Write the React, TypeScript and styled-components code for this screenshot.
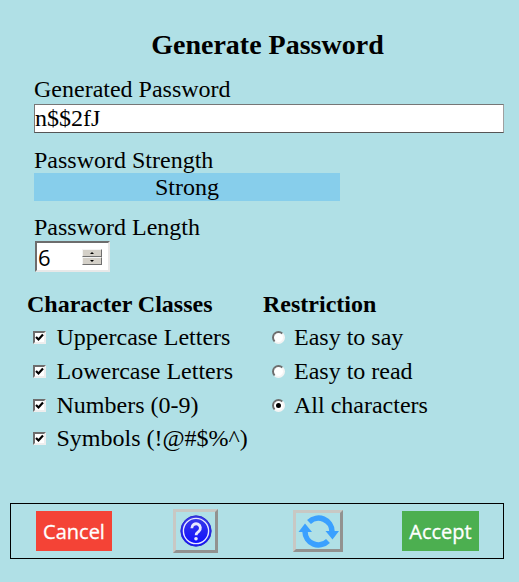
import React from 'react'
import styled, { createGlobalStyle } from 'styled-components'

const GlobalStyle = createGlobalStyle`
  html, body {
    margin: 0;
    padding: 0;
    background: #b0e0e6;
  }
  body {
    font-family: "Liberation Serif", "Times New Roman", serif;
    color: #000;
  }
`

const Page = styled.div`
  width: 519px;
  height: 582px;
  display: flex;
  flex-direction: column;
  box-sizing: border-box;
  padding: 29px 15px 0 9px;
  overflow: hidden;
`

const Title = styled.h1`
  margin: 0 0 15px;
  font-size: 28px;
  line-height: 32px;
  font-weight: bold;
  text-align: center;
  width: 517px;
`

const Section = styled.div<{ $gap: number }>`
  padding-left: 25px;
  margin-bottom: ${p => p.$gap}px;
`

const Label = styled.div`
  font-size: 24px;
  line-height: 26px;
`

const PasswordInput = styled.div`
  width: 470px;
  height: 29px;
  margin-top: 2px;
  box-sizing: border-box;
  background: #fff;
  border: 1px solid;
  border-color: #767676 #a0a0a0 #555 #767676;
  font-size: 24px;
  line-height: 26px;
`

const StrengthBar = styled.div`
  width: 306px;
  height: 28px;
  background: #87ceeb;
  font-size: 24px;
  line-height: 29px;
  text-align: center;
`

const SpinBox = styled.div`
  width: 75px;
  height: 31px;
  margin-top: 1px;
  margin-left: 1px;
  box-sizing: border-box;
  background: #fff;
  border: 2px solid;
  border-color: #6d6d6d #e8e8e8 #e8e8e8 #6d6d6d;
  display: flex;
  align-items: center;
  justify-content: space-between;
  padding: 0 6px 0 1px;
  font-family: "Open Sans", "DejaVu Sans", sans-serif;
  font-size: 22px;
`

const SpinButtons = styled.div`
  display: flex;
  flex-direction: column;
  width: 20px;
`

const SpinButton = styled.div<{ $down?: boolean }>`
  height: 8px;
  box-sizing: border-box;
  background: #d4d0c8;
  border: 1px solid;
  border-color: #f4f4f4 #6f6f6f #6f6f6f #f4f4f4;
  position: relative;
  &::after {
    content: "";
    position: absolute;
    left: 7px;
    top: 2px;
    border-left: 2px solid transparent;
    border-right: 2px solid transparent;
    ${p => (p.$down ? 'border-top: 2px solid #000;' : 'border-bottom: 2px solid #000;')}
  }
`

const Columns = styled.div`
  display: flex;
  margin-top: 8px;
`

const Column = styled.div<{ $width: number }>`
  width: ${p => p.$width}px;
  padding-left: 18px;
  box-sizing: border-box;
`

const Heading = styled.div`
  font-size: 24px;
  line-height: 26px;
  font-weight: bold;
  margin-bottom: 4px;
`

const OptionRow = styled.div`
  display: flex;
  align-items: center;
  height: 33.7px;
  font-size: 24px;
  white-space: nowrap;
`

const CheckBox = styled.span`
  width: 13px;
  height: 13px;
  box-sizing: border-box;
  margin: 0 10.5px 0 6px;
  background: #fff;
  border: 2px solid;
  border-color: #6d6d6d #eee #eee #6d6d6d;
  flex: none;
  display: flex;
`

const RadioMark = styled.span`
  width: 13px;
  height: 13px;
  box-sizing: border-box;
  margin: 0 9px 0 9px;
  border-radius: 50%;
  background: #fff;
  border: 2px solid;
  border-color: #6d6d6d #f4f4f4 #f4f4f4 #6d6d6d;
  flex: none;
  display: flex;
  align-items: center;
  justify-content: center;
`

const RadioDot = styled.span`
  width: 5px;
  height: 5px;
  border-radius: 50%;
  background: #000;
`

const Footer = styled.div`
  margin-top: 47px;
  margin-left: 1px;
  width: 494px;
  height: 56px;
  box-sizing: border-box;
  border: 1px solid #000;
  display: flex;
  align-items: center;
  padding-left: 25px;
`

const TextButton = styled.div<{ $bg: string; $width: number; $offset?: number }>`
  width: ${p => p.$width}px;
  height: 40px;
  margin-left: ${p => p.$offset || 0}px;
  background: ${p => p.$bg};
  color: #fff;
  font-family: "Open Sans", "Noto Sans", sans-serif;
  font-size: 20px;
  line-height: 41px;
  text-align: center;
  -webkit-text-stroke: 0.3px #fff;
`

const IconButton = styled.div<{ $width: number; $height: number; $offset: number }>`
  width: ${p => p.$width}px;
  height: ${p => p.$height}px;
  margin-left: ${p => p.$offset}px;
  box-sizing: border-box;
  border: 3px solid;
  border-color: #c8c8c4 #929290 #929290 #c8c8c4;
  display: flex;
  align-items: center;
  justify-content: center;
`

const HelpIcon = () => (
  <svg width="32" height="32" viewBox="0 0 32 32">
    <defs>
      <linearGradient id="helpFill" x1="0" y1="0" x2="0" y2="1">
        <stop offset="0" stopColor="#3c3ce6" />
        <stop offset="1" stopColor="#0c0cff" />
      </linearGradient>
    </defs>
    <circle cx="16" cy="16" r="15.2" fill="url(#helpFill)" stroke="#2a2ad0" strokeWidth="1" />
    <circle cx="16" cy="16" r="12.6" fill="none" stroke="#e8e8ff" strokeWidth="1.4" />
    <path
      d="M11.8 13.2a4.300 4.300 0 1 1 7 3.200c-1.700 1.300-2.700 1.900-2.700 3.800"
      fill="none"
      stroke="#e8e8ff"
      strokeWidth="2.800"
    />
    <circle cx="16" cy="23.800" r="1.800" fill="#e8e8ff" />
  </svg>
)

const RefreshIcon = () => (
  <svg width="44" height="36" viewBox="0 0 44 36">
    <g fill="none" stroke="#3aa0ff" strokeWidth="5.500">
      <path d="M13 9A13.500 13.500 0 0 1 36 18.500" />
      <path d="M9 18.500A13.500 13.500 0 0 0 32 28" />
    </g>
    <path d="M2.500 19 9 10.500 16 19z" fill="#3aa0ff" />
    <path d="M29.500 18 43 18 36.500 26.500z" fill="#3aa0ff" />
  </svg>
)

const CheckMark = () => (
  <svg width="9" height="9" viewBox="0 0 9 9">
    <path d="M1 4l2.500 2.500L8 1.500" fill="none" stroke="#000" strokeWidth="2.200" />
  </svg>
)

const classes = ['Uppercase Letters', 'Lowercase Letters', 'Numbers (0-9)', 'Symbols (!@#$%^)']
const restrictions = [
  { label: 'Easy to say', on: false },
  { label: 'Easy to read', on: false },
  { label: 'All characters', on: true },
]

const App = () => (
  <>
    <GlobalStyle />
    <Page>
      <Title>Generate Password</Title>
      <Section $gap={14}>
        <Label>Generated Password</Label>
        <PasswordInput>n$$2fJ</PasswordInput>
      </Section>
      <Section $gap={13}>
        <Label>Password Strength</Label>
        <StrengthBar>Strong</StrengthBar>
      </Section>
      <Section $gap={11}>
        <Label>Password Length</Label>
        <SpinBox>
          6
          <SpinButtons>
            <SpinButton />
            <SpinButton $down />
          </SpinButtons>
        </SpinBox>
      </Section>
      <Columns>
        <Column $width={236}>
          <Heading>Character Classes</Heading>
          {classes.map(c => (
            <OptionRow key={c}>
              <CheckBox>
                <CheckMark />
              </CheckBox>
              {c}
            </OptionRow>
          ))}
        </Column>
        <Column $width={250}>
          <Heading>Restriction</Heading>
          {restrictions.map(r => (
            <OptionRow key={r.label}>
              <RadioMark>{r.on && <RadioDot />}</RadioMark>
              {r.label}
            </OptionRow>
          ))}
        </Column>
      </Columns>
      <Footer>
        <TextButton $bg="#f44336" $width={76}>Cancel</TextButton>
        <IconButton $width={45} $height={44} $offset={61}>
          <HelpIcon />
        </IconButton>
        <IconButton $width={50} $height={42} $offset={75}>
          <RefreshIcon />
        </IconButton>
        <TextButton $bg="#4caf50" $width={77} $offset={59}>Accept</TextButton>
      </Footer>
    </Page>
  </>
)

export default App
